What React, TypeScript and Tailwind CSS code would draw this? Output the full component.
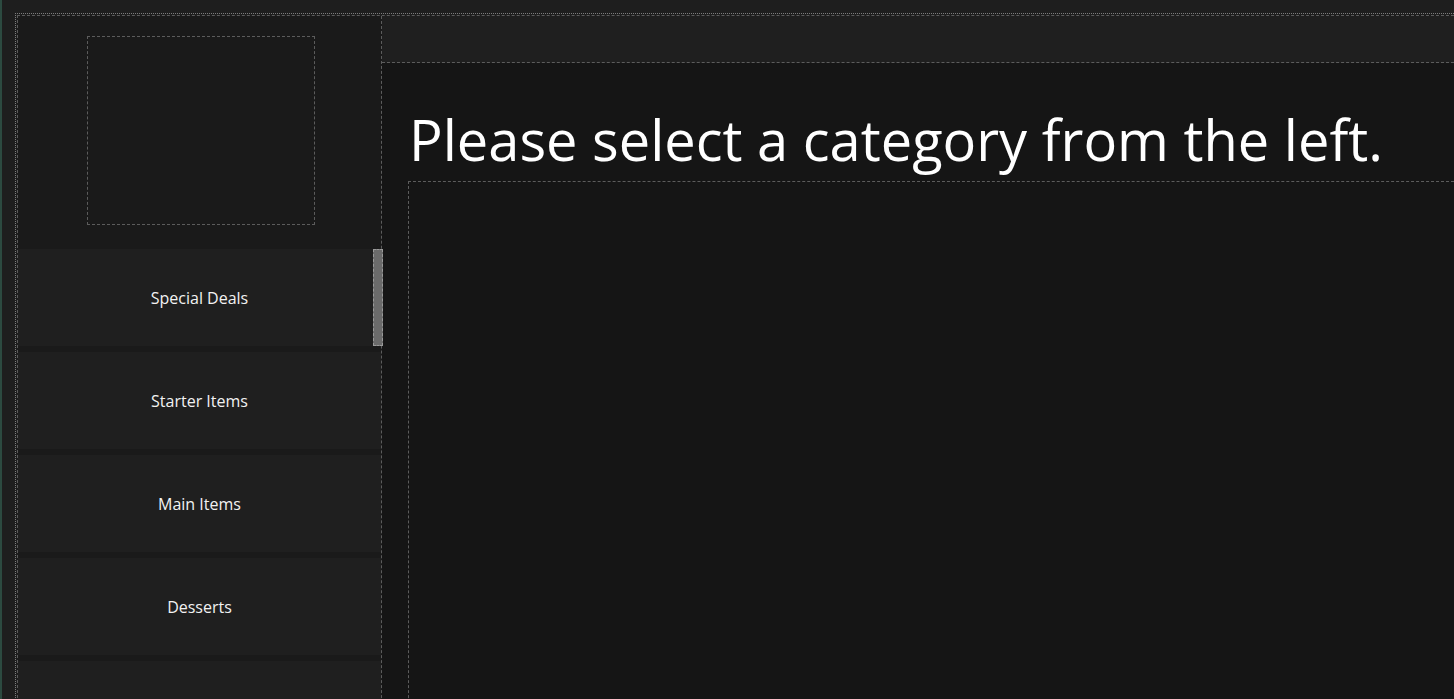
import React from 'react'

const categories = ['Special Deals', 'Starter Items', 'Main Items', 'Desserts', '']

export default function App() {
  return (
    <div
      className="flex h-[699px] w-full overflow-hidden bg-[#1e1e1e] text-white"
      style={{ fontFamily: '"Open Sans", "Noto Sans", sans-serif' }}
    >
      {/* window edge */}
      <div className="w-[2px] shrink-0 bg-[#2c4a40]" />

      <div className="flex flex-1 flex-col pl-[13px] pt-[13px]">
        {/* outer dotted frame */}
        <div className="flex flex-1 flex-col border-l border-t border-dotted border-[#7c7c7c] pl-[1px] pt-[1px]">
          <div className="flex flex-1 border-l border-t border-dashed border-[#5c5c5c]">
            {/* Sidebar */}
            <aside className="relative flex w-[364px] shrink-0 flex-col border-r border-dashed border-[#5c5c5c] bg-[#1a1a1a]">
              <div className="flex h-[233px] shrink-0 justify-center pl-[2px] pt-[20px]">
                <div className="h-[189px] w-[228px] border border-dashed border-[#5c5c5c]" />
              </div>
              <nav className="flex flex-col gap-[6px]">
                {categories.map((c, i) => (
                  <button
                    key={i}
                    className="flex h-[97px] w-full shrink-0 items-center justify-center bg-[#1f1f1f] text-[16px] text-[#f2f2f2]"
                  >
                    {c}
                  </button>
                ))}
              </nav>
              {/* scrollbar thumb */}
              <div className="absolute right-[-2px] top-[233px] h-[97px] w-[10px] border border-dashed border-[#9a9a9a] bg-[#6b6b6b]" />
            </aside>

            {/* Main */}
            <main className="flex flex-1 flex-col bg-[#151515]">
              <div className="h-[47px] shrink-0 border-b border-dashed border-[#5c5c5c] bg-[#1f1f1f]" />
              <h1 className="ml-[27px] mt-[48px] whitespace-nowrap text-[56px] font-normal leading-[56px] text-white">
                Please select a category from the left.
              </h1>
              <div className="ml-[26px] mt-[14px] flex-1 border-l border-t border-dashed border-[#5c5c5c]" />
            </main>
          </div>
        </div>
      </div>
    </div>
  )
}
